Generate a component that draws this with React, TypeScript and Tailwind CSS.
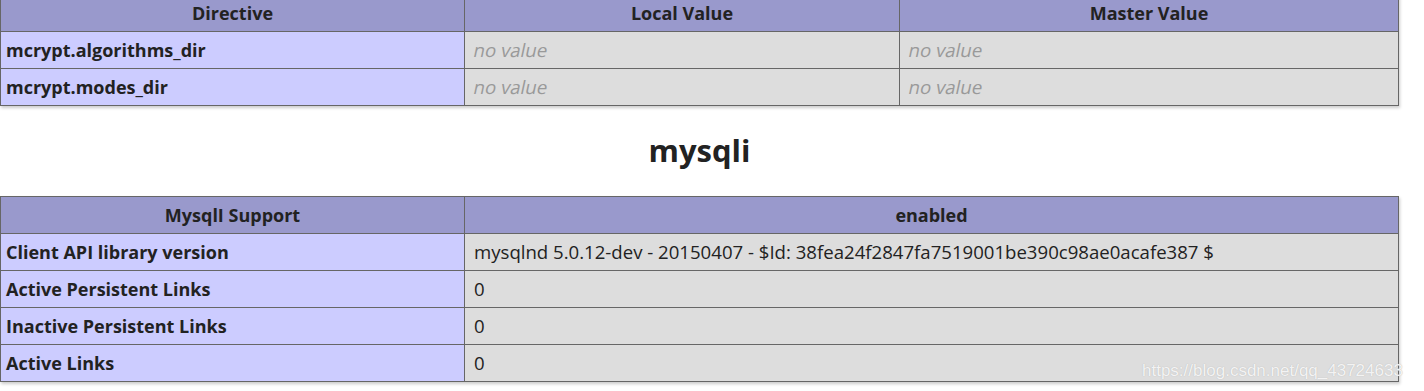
import React from 'react';

const font = "font-['Open_Sans','Noto_Sans',sans-serif]";

const Cell: React.FC<{ kind: 'h' | 'e' | 'v'; children?: React.ReactNode; className?: string; colSpan?: number }> = ({ kind, children, className = '', colSpan }) => {
  const base = 'h-[37px] border border-[#666] align-middle text-[#222]';
  const kindCls =
    kind === 'h'
      ? 'bg-[#9999cc] px-[7px] text-[18px] font-bold text-center'
      : kind === 'e'
        ? 'bg-[#ccccff] pl-[5px] pr-[7px] text-[18px] font-bold text-left'
        : 'bg-[#dddddd] pl-[9px] pr-[7px] text-[18.6px] text-left';
  return (
    <td colSpan={colSpan} className={`${base} ${kindCls} ${className}`}>
      {children}
    </td>
  );
};

// the original renders "no value" with a synthetic slant, so skew the upright face
const NoValue = () => <span className="inline-block -skew-x-12 text-[#999]">no value</span>;

export default function App() {
  const mysqliRows: [string, string][] = [
    ['Client API library version', 'mysqlnd 5.0.12-dev - 20150407 - $Id: 38fea24f2847fa7519001be390c98ae0acafe387 $'],
    ['Active Persistent Links', '0'],
    ['Inactive Persistent Links', '0'],
    ['Active Links', '0'],
  ];

  return (
    <div className={`relative h-[391px] w-[1424px] overflow-hidden bg-white ${font}`}>
      <table className="-mt-[6px] w-[1399px] table-fixed border-collapse shadow-[1px_2px_3px_#ccc]">
        <colgroup>
          <col className="w-[464px]" />
          <col className="w-[435px]" />
          <col />
        </colgroup>
        <tbody>
          <tr>
            <Cell kind="h">Directive</Cell>
            <Cell kind="h">Local Value</Cell>
            <Cell kind="h">Master Value</Cell>
          </tr>
          <tr>
            <Cell kind="e">mcrypt.algorithms_dir</Cell>
            <Cell kind="v"><NoValue /></Cell>
            <Cell kind="v"><NoValue /></Cell>
          </tr>
          <tr>
            <Cell kind="e">mcrypt.modes_dir</Cell>
            <Cell kind="v"><NoValue /></Cell>
            <Cell kind="v"><NoValue /></Cell>
          </tr>
        </tbody>
      </table>

      <h2 className="w-[1399px] pt-[25px] pb-[26px] text-center text-[31px] leading-[39px] font-bold text-[#222]">mysqli</h2>

      <table className="w-[1399px] table-fixed border-collapse shadow-[1px_2px_3px_#ccc]">
        <colgroup>
          <col className="w-[464px]" />
          <col />
        </colgroup>
        <tbody>
          <tr>
            <Cell kind="h">MysqlI Support</Cell>
            <Cell kind="h">enabled</Cell>
          </tr>
          {mysqliRows.map(([k, v]) => (
            <tr key={k}>
              <Cell kind="e">{k}</Cell>
              <Cell kind="v">{v}</Cell>
            </tr>
          ))}
        </tbody>
      </table>

      {/* csdn watermark */}
      <div className="pointer-events-none absolute left-[1142px] top-[362px] whitespace-nowrap text-[17px] leading-none text-white/85 [text-shadow:0_0_1px_#aaa] font-['Liberation_Sans',sans-serif]">
        https://blog.csdn.net/qq_43724633
      </div>
    </div>
  );
}
